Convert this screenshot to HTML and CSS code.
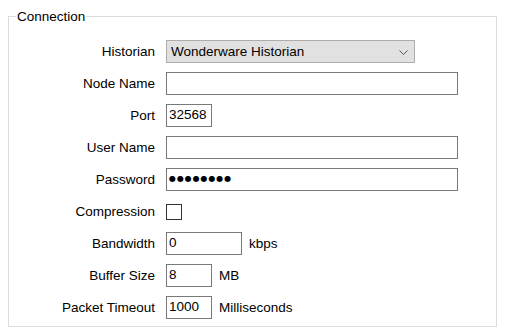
FILE: index.html
```html
<!DOCTYPE html>
<html>
<head>
<meta charset="utf-8">
<link rel="stylesheet" href="styles.css">
</head>
<body>
<fieldset class="group">
  <legend class="group-title">Connection</legend>
  <div class="form">
    <label class="lbl">Historian</label>
    <div class="field">
      <div class="combo"><span class="combo-text">Wonderware Historian</span>
        <svg class="chev" width="9" height="5" viewBox="0 0 9 5"><path d="M0.5 0.5 L4.5 4.5 L8.5 0.5" fill="none" stroke="#555" stroke-width="1"/></svg>
      </div>
    </div>

    <label class="lbl">Node Name</label>
    <div class="field"><div class="box w-wide"></div></div>

    <label class="lbl">Port</label>
    <div class="field"><div class="box w-small">32568</div></div>

    <label class="lbl">User Name</label>
    <div class="field"><div class="box w-wide"></div></div>

    <label class="lbl">Password</label>
    <div class="field"><div class="box w-wide pwd">●●●●●●●●</div></div>

    <label class="lbl">Compression</label>
    <div class="field"><div class="check"></div></div>

    <label class="lbl">Bandwidth</label>
    <div class="field"><div class="box w-mid">0</div><span class="unit">kbps</span></div>

    <label class="lbl">Buffer Size</label>
    <div class="field"><div class="box w-small">8</div><span class="unit">MB</span></div>

    <label class="lbl">Packet Timeout</label>
    <div class="field"><div class="box w-small">1000</div><span class="unit">Milliseconds</span></div>
  </div>
</fieldset>
</body>
</html>
```

FILE: styles.css
```css
html, body {
  margin: 0;
  padding: 0;
  background: #ffffff;
}
body {
  font-family: "Liberation Sans", Arial, sans-serif;
  font-size: 13.5px;
  color: #000;
}
.group {
  margin: 8px 8px 0 8px;
  padding: 15px 0 7px 0;
  border: 1px solid #dcdcdc;
  min-width: 0;
}
.group-title {
  margin-left: 7px;
  padding: 0 1px;
  line-height: 17px;
}
.form {
  display: grid;
  grid-template-columns: 146px 1fr;
  column-gap: 11px;
  row-gap: 9px;
  grid-auto-rows: 23px;
}
.lbl {
  display: flex;
  align-items: center;
  justify-content: flex-end;
  white-space: nowrap;
}
.field {
  display: flex;
  align-items: center;
  gap: 7px;
}
.combo {
  box-sizing: border-box;
  width: 249px;
  height: 23px;
  background: #e1e1e1;
  border: 1px solid #adadad;
  display: flex;
  align-items: center;
  justify-content: space-between;
  padding: 0 6px 0 4px;
}
.chev {
  display: block;
  margin-top: 1px;
}
.box {
  box-sizing: border-box;
  height: 23px;
  border: 1px solid #7a7a7a;
  background: #fff;
  padding: 0 2px;
  display: flex;
  align-items: center;
  line-height: 1;
  padding-bottom: 1px;
}
.w-wide { width: 292px; }
.w-small { width: 46px; }
.w-mid { width: 76px; }
.pwd {
  font-family: "DejaVu Sans", sans-serif;
  font-size: 8px;
  letter-spacing: 0.9px;
}
.check {
  box-sizing: border-box;
  width: 16px;
  height: 16px;
  border: 1px solid #333;
  background: #fff;
}
.unit {
  white-space: nowrap;
}
```
